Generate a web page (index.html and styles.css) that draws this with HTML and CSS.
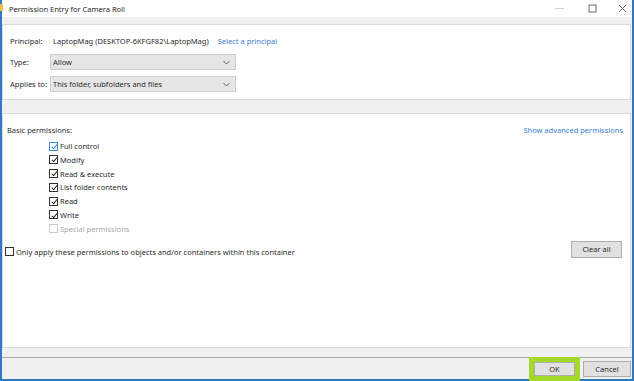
FILE: index.html
```html
<!DOCTYPE html>
<html>
<head>
<meta charset="utf-8">
<link rel="stylesheet" href="styles.css">
</head>
<body>
<div class="window">
  <span class="app-icon"></span>
  <div class="titlebar">
    <div class="title">Permission Entry for Camera Roll</div>
    <div class="controls">
      <span class="ctl min"><svg width="9" height="9" viewBox="0 0 9 9"><path d="M0 4.5h9" stroke="#d4d4d4" stroke-width="1"/></svg></span>
      <span class="ctl max"><svg width="9" height="9" viewBox="0 0 9 9"><rect x="1" y="1" width="7" height="7" fill="none" stroke="#6a6a6a" stroke-width="1"/></svg></span>
      <span class="ctl close"><svg width="9" height="9" viewBox="0 0 9 9"><path d="M1 1l7 7M8 1l-7 7" stroke="#6a6a6a" stroke-width="1"/></svg></span>
    </div>
  </div>
  <div class="gap-top"></div>
  <div class="panel panel-top">
    <div class="row row-principal">
      <span class="lbl">Principal:</span>
      <span class="val">LaptopMag (DESKTOP-6KFGF82\LaptopMag)</span>
      <span class="link">Select a principal</span>
    </div>
    <div class="row">
      <span class="lbl">Type:</span>
      <div class="select"><span>Allow</span><svg width="7" height="5" viewBox="0 0 7 5"><path d="M0.5 1l3 3 3-3" fill="none" stroke="#555" stroke-width="0.9"/></svg></div>
    </div>
    <div class="row">
      <span class="lbl">Applies to:</span>
      <div class="select"><span>This folder, subfolders and files</span><svg width="7" height="5" viewBox="0 0 7 5"><path d="M0.5 1l3 3 3-3" fill="none" stroke="#555" stroke-width="0.9"/></svg></div>
    </div>
  </div>
  <div class="gap-mid"></div>
  <div class="panel panel-main">
    <div class="perm-head">
      <span>Basic permissions:</span>
      <span class="link">Show advanced permissions</span>
    </div>
    <div class="perm-list">
      <label class="cb-row"><span class="cb checked focus"></span>Full control</label>
      <label class="cb-row"><span class="cb checked"></span>Modify</label>
      <label class="cb-row"><span class="cb checked"></span>Read &amp; execute</label>
      <label class="cb-row"><span class="cb checked"></span>List folder contents</label>
      <label class="cb-row"><span class="cb checked"></span>Read</label>
      <label class="cb-row"><span class="cb checked"></span>Write</label>
      <label class="cb-row disabled"><span class="cb"></span>Special permissions</label>
    </div>
    <div class="apply-row">
      <label class="cb-row apply"><span class="cb"></span>Only apply these permissions to objects and/or containers within this container</label>
      <button class="btn clear">Clear all</button>
    </div>
  </div>
  <div class="gap-bot"></div>
  <div class="sep"></div>
  <div class="footer">
    <div class="ok-wrap"><button class="btn ok">OK</button></div>
    <button class="btn cancel">Cancel</button>
  </div>
</div>
</body>
</html>
```
FILE: styles.css
```css
* { box-sizing: border-box; }
html, body { margin: 0; padding: 0; }
body {
  width: 634px;
  height: 381px;
  overflow: hidden;
  background: #f0f0f0;
  font-family: "Noto Sans", "DejaVu Sans", sans-serif;
  font-size: 7.5px;
  color: #2b2b2b;
}
.window {
  position: relative;
  width: 634px;
  height: 381px;
  display: flex;
  flex-direction: column;
  background: #f0f0f0;
  border-left: 2px solid #2e7bc4;
  border-right: 2px solid #2e7bc4;
  border-bottom: 2px solid #2e7bc4;
}
.app-icon {
  position: absolute;
  left: -2px;
  top: 4px;
  width: 3px;
  height: 7px;
  background: #e8c04a;
}
.titlebar {
  height: 17px;
  background: #fff;
  display: flex;
  align-items: center;
  justify-content: space-between;
  flex: none;
}
.title { padding-left: 7px; color: #262626; }
.controls { display: flex; height: 17px; }
.ctl { display: flex; align-items: center; justify-content: center; }
.ctl.min { width: 26px; }
.ctl.max { width: 40px; }
.ctl.close { width: 20px; }
.gap-top { height: 7px; flex: none; }
.panel {
  background: #fff;
  border: 1px solid #dadada;
  margin-right: 1px;
  flex: none;
}
.panel-top {
  height: 76px;
  padding: 9px 0 0 7px;
  display: flex;
  flex-direction: column;
  gap: 6px;
}
.row { display: flex; align-items: center; height: 16px; }
.row-principal { height: 14px; }
.lbl { width: 40px; }
.val { margin-left: 3px; }
.link { color: #3b80d2; }
.row-principal .link { margin-left: 9px; }
.select {
  width: 186px;
  height: 16px;
  background: #e6e6e6;
  border: 1px solid #cdcdcd;
  display: flex;
  align-items: center;
  justify-content: space-between;
  padding: 0 5px 0 2px;
}
.gap-mid { height: 13px; flex: none; }
.panel-main {
  height: 235px;
  padding: 10px 7px 0 2px;
}
.perm-head {
  display: flex;
  justify-content: space-between;
  height: 12px;
  align-items: center;
  padding-left: 2px;
}
.perm-list {
  display: flex;
  flex-direction: column;
  padding-left: 44px;
  margin-top: 5px;
  gap: 3.8px;
}
.cb-row { display: flex; align-items: center; gap: 2px; height: 10px; }
.cb {
  width: 9px;
  height: 9px;
  border: 1px solid #333;
  background: #fff;
  position: relative;
  flex: none;
}
.cb.focus { border-color: #3c8ad8; }
.cb.checked::after {
  content: "";
  position: absolute;
  left: 2.5px;
  top: 0.2px;
  width: 2.3px;
  height: 5px;
  border-right: 1px solid #222;
  border-bottom: 1px solid #222;
  transform: rotate(40deg);
}
.cb.focus.checked::after { border-color: #3c8ad8; }
.disabled { color: #a8a8a8; }
.disabled .cb { border-color: #cccccc; }
.apply-row {
  display: flex;
  align-items: flex-start;
  justify-content: space-between;
  margin-top: 7px;
}
.apply-row .apply { margin-top: 6px; gap: 2px; }
.btn {
  font-family: inherit;
  font-size: 7.5px;
  color: #2b2b2b;
  background: #e1e1e1;
  border: 1px solid #adadad;
  padding: 0;
  margin: 0;
}
.clear { width: 51px; height: 17px; margin-right: 1px; }
.gap-bot { height: 9px; flex: none; }
.sep { height: 1px; background: #a9a9a9; flex: none; }
.footer {
  flex: 1;
  display: flex;
  justify-content: flex-end;
  align-items: flex-start;
  padding: 3px 1px 0 0;
  gap: 3px;
}
.ok-wrap {
  margin-top: -4px;
  margin-bottom: -2px;
  border: 5px solid #a4d82a;
  background: #a4d82a;
  display: flex;
  height: 25px;
  position: relative;
  z-index: 1;
}
.ok { width: 41px; height: 14px; }
.cancel { width: 48px; height: 16px; }
```
